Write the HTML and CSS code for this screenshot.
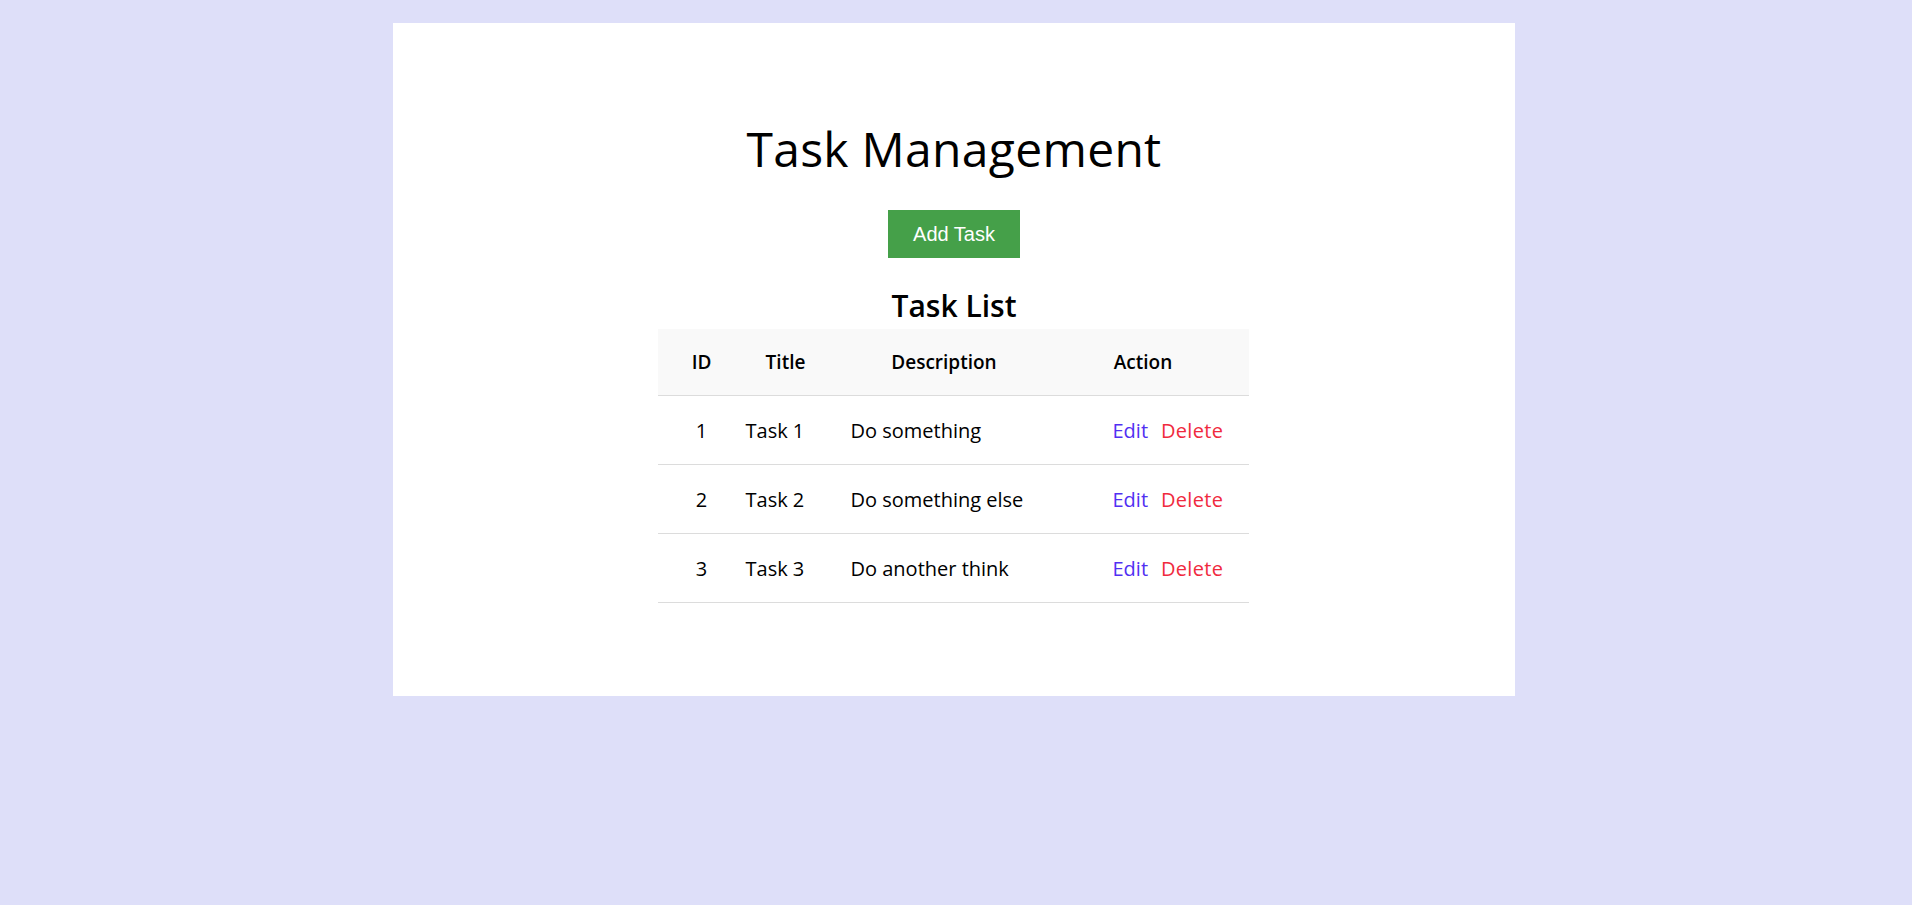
FILE: index.html
```html
<!DOCTYPE html>
<html lang="en">
<head>
<meta charset="utf-8">
<title>Task Management</title>
<link rel="stylesheet" href="styles.css">
</head>
<body>
  <main class="card">
    <h1 class="title">Task Management</h1>
    <button class="add-btn" type="button">Add Task</button>
    <h2 class="list-title">Task List</h2>
    <table class="tasks">
      <colgroup>
        <col class="w-id">
        <col class="w-title">
        <col class="w-desc">
        <col class="w-action">
      </colgroup>
      <thead>
        <tr>
          <th class="c-id">ID</th>
          <th class="c-title">Title</th>
          <th class="c-desc">Description</th>
          <th class="c-action">Action</th>
        </tr>
      </thead>
      <tbody>
        <tr>
          <td class="c-id">1</td>
          <td class="c-title">Task 1</td>
          <td class="c-desc">Do something</td>
          <td class="c-action"><a class="edit" href="#">Edit</a><a class="delete" href="#">Delete</a></td>
        </tr>
        <tr>
          <td class="c-id">2</td>
          <td class="c-title">Task 2</td>
          <td class="c-desc">Do something else</td>
          <td class="c-action"><a class="edit" href="#">Edit</a><a class="delete" href="#">Delete</a></td>
        </tr>
        <tr>
          <td class="c-id">3</td>
          <td class="c-title">Task 3</td>
          <td class="c-desc">Do another think</td>
          <td class="c-action"><a class="edit" href="#">Edit</a><a class="delete" href="#">Delete</a></td>
        </tr>
      </tbody>
    </table>
  </main>
</body>
</html>
```

FILE: styles.css
```css
html, body {
  margin: 0;
  padding: 0;
}

body {
  background: #dedff9;
  font-family: "Open Sans", "Liberation Sans", sans-serif;
  color: #000;
  padding-top: 23px;
  min-height: 905px;
  box-sizing: border-box;
}

.card {
  width: 1122px;
  height: 673px;
  margin-left: calc(50% - 563px);
  background: #fff;
  box-sizing: border-box;
  padding-top: 97px;
  display: flex;
  flex-direction: column;
  align-items: center;
}

.title {
  margin: 0;
  font-size: 48px;
  line-height: 58px;
  font-weight: 500;
  letter-spacing: 0.3px;
}

.add-btn {
  margin-top: 32px;
  width: 132px;
  height: 48px;
  border: none;
  background: #45a049;
  color: #fff;
  font-family: "Liberation Sans", Arial, sans-serif;
  font-size: 20px;
  padding: 0;
  cursor: pointer;
}

.list-title {
  margin: 24px 0 0;
  font-size: 30px;
  line-height: 47px;
  font-weight: 600;
}

.tasks {
  width: 591px;
  table-layout: fixed;
  border-collapse: collapse;
  margin-left: -2px;
}

.w-id { width: 88px; }
.w-title { width: 80px; }
.w-desc { width: 237px; }
.w-action { width: 186px; }

.tasks th {
  background: #f9f9f9;
  height: 66px;
  font-size: 19px;
  font-weight: 600;
  padding: 0;
  border-bottom: 1px solid #dcdcdc;
  text-align: center;
}

.tasks td {
  height: 68px;
  font-size: 20px;
  font-weight: 400;
  padding: 0;
  border-bottom: 1px solid #dcdcdc;
  text-align: left;
  white-space: nowrap;
}

.tasks td.c-id { text-align: center; }
.tasks td.c-desc { padding-left: 25px; }
.tasks th.c-action { padding-right: 25px; }
.tasks td.c-action { padding-left: 50px; }

.edit, .delete {
  text-decoration: none;
}

.edit {
  color: #5130f2;
  margin-right: 13px;
}

.delete {
  color: #f02a3e;
  letter-spacing: 0.3px;
}
```
